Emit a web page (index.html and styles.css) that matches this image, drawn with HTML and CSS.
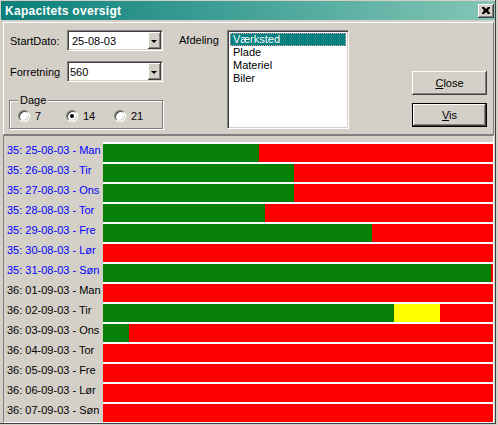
FILE: index.html
```html
<!DOCTYPE html>
<html>
<head>
<meta charset="utf-8">
<link rel="stylesheet" href="styles.css">
</head>
<body>
<div class="window">
  <div class="titlebar">
    <span class="title">Kapacitets oversigt</span>
    <div class="xbtn"><svg width="8" height="7" viewBox="0 0 8 7"><path d="M0 0h2l2 2 2-2h2v1L6 3.5 8 6v1H6L4 5 2 7H0V6l2-2.5L0 1z" fill="#000"/></svg></div>
  </div>
  <div class="top">
    <div class="leftcol">
      <div class="field">
        <span class="flabel">StartDato:</span>
        <div class="combo"><span class="ctext">25-08-03</span><div class="dd"><span class="tri"></span></div></div>
      </div>
      <div class="field field2">
        <span class="flabel">Forretning</span>
        <div class="combo"><span class="ctext ctext2">560</span><div class="dd"><span class="tri"></span></div></div>
      </div>
      <div class="group">
        <span class="legend">Dage</span>
        <div class="radios">
          <div class="opt"><span class="radio"></span><span>7</span></div>
          <div class="opt"><span class="radio checked"></span><span>14</span></div>
          <div class="opt"><span class="radio"></span><span>21</span></div>
        </div>
      </div>
    </div>
    <span class="afd">Afdeling</span>
    <div class="listbox">
      <div class="item sel">Værksted</div>
      <div class="item">Plade</div>
      <div class="item">Materiel</div>
      <div class="item">Biler</div>
    </div>
    <div class="btncol">
      <div class="btn"><span><u>C</u>lose</span></div>
      <div class="btn default"><span><u>V</u>is</span></div>
    </div>
  </div>
  <div class="chart">
    <div class="row"><span class="lab wk35">35: 25-08-03 - Man</span><div class="track"><div class="bar"><span class="g" style="width:156px"></span></div></div></div>
    <div class="row"><span class="lab wk35">35: 26-08-03 - Tir</span><div class="track"><div class="bar"><span class="g" style="width:191px"></span></div></div></div>
    <div class="row"><span class="lab wk35">35: 27-08-03 - Ons</span><div class="track"><div class="bar"><span class="g" style="width:191px"></span></div></div></div>
    <div class="row"><span class="lab wk35">35: 28-08-03 - Tor</span><div class="track"><div class="bar"><span class="g" style="width:162px"></span></div></div></div>
    <div class="row"><span class="lab wk35">35: 29-08-03 - Fre</span><div class="track"><div class="bar"><span class="g" style="width:269px"></span></div></div></div>
    <div class="row"><span class="lab wk35">35: 30-08-03 - Lør</span><div class="track"><div class="bar"></div></div></div>
    <div class="row"><span class="lab wk35">35: 31-08-03 - Søn</span><div class="track"><div class="bar"><span class="g" style="width:388px"></span></div></div></div>
    <div class="row"><span class="lab">36: 01-09-03 - Man</span><div class="track"><div class="bar"></div></div></div>
    <div class="row"><span class="lab">36: 02-09-03 - Tir</span><div class="track"><div class="bar"><span class="g" style="width:291px"></span><span class="y" style="width:46px"></span></div></div></div>
    <div class="row"><span class="lab">36: 03-09-03 - Ons</span><div class="track"><div class="bar"><span class="g" style="width:26px"></span></div></div></div>
    <div class="row"><span class="lab">36: 04-09-03 - Tor</span><div class="track"><div class="bar"></div></div></div>
    <div class="row"><span class="lab">36: 05-09-03 - Fre</span><div class="track"><div class="bar"></div></div></div>
    <div class="row"><span class="lab">36: 06-09-03 - Lør</span><div class="track"><div class="bar"></div></div></div>
    <div class="row"><span class="lab">36: 07-09-03 - Søn</span><div class="track"><div class="bar"></div></div></div>
  </div>
</div>
</body>
</html>
```
FILE: styles.css
```css
* { box-sizing: border-box; }
html, body { margin: 0; }
body {
  width: 498px;
  height: 425px;
  overflow: hidden;
  background: #d4d0c8;
  font-family: "Liberation Sans", Arial, sans-serif;
  font-size: 11px;
  color: #000;
}
.window {
  width: 496px;
  height: 424px;
  border-right: 1px solid #404040;
  border-bottom: 1px solid #404040;
  padding: 1px 0 0 1px;
  display: flex;
  flex-direction: column;
}
.titlebar {
  height: 19px;
  flex: none;
  background: linear-gradient(90deg, #0a7f7b 0%, #3f9f96 45%, #84c6b6 100%);
  display: flex;
  align-items: center;
  justify-content: space-between;
  padding: 0 1px 0 4px;
}
.title {
  color: #fff;
  font-weight: bold;
  font-size: 12px;
  letter-spacing: 0.3px;
}
.xbtn {
  width: 16px;
  height: 14px;
  background: #d4d0c8;
  box-shadow: inset -1px -1px #404040, inset 1px 1px #fff, inset -2px -2px #808080;
  display: flex;
  align-items: center;
  justify-content: center;
  padding: 0 1px 1px 0;
}
.xbtn svg { display: block; }

.top {
  flex: none;
  height: 113px;
  margin: 2px 1px 0 2px;
  border-top: 1px solid #fff;
  border-left: 1px solid #fff;
  border-right: 1px solid #808080;
  border-bottom: 1px solid #808080;
  display: flex;
  align-items: flex-start;
  padding: 7px 0 0 5px;
}
.leftcol {
  width: 155px;
  flex: none;
  display: flex;
  flex-direction: column;
}
.field {
  display: flex;
  align-items: center;
  height: 21px;
}
.field2 { margin-top: 10px; }
.flabel {
  width: 58px;
  padding-left: 1px;
}
.combo {
  width: 96px;
  height: 21px;
  background: #fff;
  border: 1px solid;
  border-color: #808080 #fff #fff #808080;
  box-shadow: inset 1px 1px #404040, inset -1px -1px #d4d0c8;
  display: flex;
  align-items: center;
  justify-content: space-between;
  padding: 1px;
}
.ctext { padding-left: 3px; }
.ctext2 { padding-left: 1px; }
.dd {
  width: 13px;
  height: 17px;
  background: #d4d0c8;
  box-shadow: inset -1px -1px #404040, inset 1px 1px #fff, inset -2px -2px #808080;
  display: flex;
  align-items: center;
  justify-content: center;
  padding: 0 1px 0 0;
}
.tri {
  width: 0;
  height: 0;
  border-left: 3px solid transparent;
  border-right: 3px solid transparent;
  border-top: 3px solid #000;
  margin-top: 1px;
}
.group {
  margin-top: 18px;
  width: 154px;
  height: 29px;
  border: 1px solid #808080;
  box-shadow: inset 1px 1px #fff, 1px 1px #fff;
  padding-left: 8px;
}
.legend {
  display: block;
  width: fit-content;
  margin-top: -7px;
  padding: 0 2px;
  height: 13px;
  line-height: 13px;
  background: #d4d0c8;
}
.radios {
  display: flex;
  margin-top: 3px;
  height: 12px;
  line-height: 12px;
}
.opt {
  display: flex;
  align-items: center;
  gap: 5px;
  width: 49px;
}
.radio {
  width: 12px;
  height: 12px;
  border-radius: 50%;
  background: #fff;
  border: 1px solid;
  border-color: #808080 #fff #fff #808080;
  box-shadow: inset 1px 1px #404040, inset -1px -1px #d4d0c8;
  display: flex;
  align-items: center;
  justify-content: center;
}
.radio.checked::after {
  content: "";
  width: 4px;
  height: 4px;
  border-radius: 50%;
  background: #000;
}
.afd {
  margin-left: 15px;
  width: 48px;
  height: 21px;
  line-height: 21px;
}
.listbox {
  width: 122px;
  height: 99px;
  background: #fff;
  border: 1px solid;
  border-color: #808080 #fff #fff #808080;
  box-shadow: inset 1px 1px #404040, inset -1px -1px #d4d0c8;
  padding: 2px;
}
.item {
  height: 13px;
  line-height: 13px;
  padding-left: 3px;
}
.item.sel {
  background: #008080;
  color: #fff;
  outline: 1px dotted #f0a0a0;
  outline-offset: -1px;
}
.btncol {
  margin-left: 63px;
  padding-top: 41px;
  display: flex;
  flex-direction: column;
  gap: 8px;
}
.btn {
  width: 75px;
  height: 24px;
  background: #d4d0c8;
  box-shadow: inset -1px -1px #404040, inset 1px 1px #fff, inset -2px -2px #808080;
  display: flex;
  align-items: center;
  justify-content: center;
}
.btn.default {
  border: 1px solid #000;
}
.chart {
  flex: 1;
  margin: 0 1px 0 2px;
  border-top: 1px solid #808080;
  border-left: 1px solid #808080;
  border-right: 1px solid #fff;
  border-bottom: 1px solid #fff;
  padding-top: 6px;
  display: flex;
  flex-direction: column;
}
.row {
  display: flex;
  height: 20px;
}
.lab {
  width: 99px;
  padding-left: 3px;
  line-height: 16px;
  white-space: nowrap;
}
.wk35 { color: #0000ff; }
.track {
  width: 390px;
  background: #fff;
  padding-top: 2px;
}
.bar {
  height: 18px;
  background: #ff0000;
  display: flex;
}
.g { background: #068006; height: 100%; }
.y { background: #ffff00; height: 100%; }
```
